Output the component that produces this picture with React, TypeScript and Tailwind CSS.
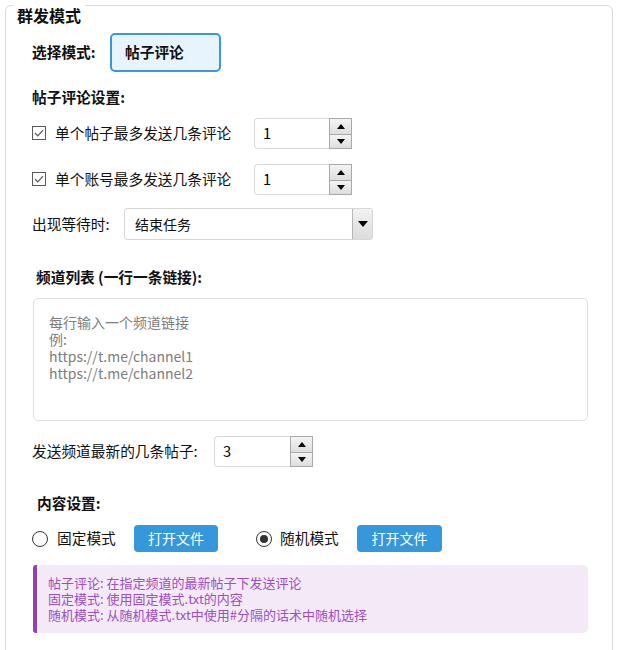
import { useState } from "react";

function Spin({ value, width }: { value: string; width: string }) {
  return (
    <div className={`flex h-[31px] ${width}`}>
      <div className="flex flex-1 items-center rounded-l-[4px] border border-r-0 border-[#d9d9d9] bg-white pl-[8px] text-[14.7px] text-black">
        {value}
      </div>
      <div className="flex w-[23px] flex-col">
        <div className="flex h-1/2 items-center justify-center border border-b-0 border-[#a9a9a9] bg-gradient-to-b from-[#f4f4f4] to-[#dedede]">
          <svg width="8" height="5" viewBox="0 0 8 5"><path d="M0 5 L4 0 L8 5 Z" fill="#000" /></svg>
        </div>
        <div className="flex h-1/2 items-center justify-center border border-[#a9a9a9] bg-gradient-to-b from-[#f4f4f4] to-[#dedede]">
          <svg width="8" height="5" viewBox="0 0 8 5"><path d="M0 0 L8 0 L4 5 Z" fill="#000" /></svg>
        </div>
      </div>
    </div>
  );
}

function Check() {
  return (
    <div className="flex h-[14px] w-[14px] items-center justify-center border border-[#5a5a5a] bg-white">
      <svg width="10" height="8" viewBox="0 0 10 8">
        <path d="M1 4 L3.8 6.8 L9 1.2" fill="none" stroke="#555" strokeWidth="1.2" />
      </svg>
    </div>
  );
}

function Radio({ on }: { on?: boolean }) {
  return (
    <div className="flex h-[16px] w-[16px] items-center justify-center rounded-full border border-[#333] bg-white">
      {on && <div className="h-[8px] w-[8px] rounded-full bg-[#333]" />}
    </div>
  );
}

export default function App() {
  const [mode, setMode] = useState("random");

  return (
    <div className="relative h-[650px] w-[620px] overflow-hidden bg-white font-['Microsoft_YaHei','Noto_Sans_CJK_SC',sans-serif] text-[#111]">
      <div className="relative ml-[5px] mt-[5px] h-[700px] w-[608px] rounded-[6px] border border-[#dadada] pl-[26px]">
        {/* group title */}
        <div className="absolute -top-[2px] left-[7px] flex h-[22px] items-center bg-white px-[4px] text-[16px] font-bold leading-none">
          群发模式
        </div>

        {/* mode select */}
        <div className="mt-[27px] flex h-[39px] items-center">
          <div className="w-[78px] text-[14.7px] font-bold leading-none">选择模式:</div>
          <button className="flex h-[39px] w-[111px] items-center rounded-[5px] border-2 border-[#3a97dc] bg-[#e8f4fd] pl-[13px] text-[14.7px] font-bold">
            帖子评论
          </button>
        </div>

        <div className="mt-[15px] flex h-[20px] items-center text-[14.7px] font-bold leading-none">帖子评论设置:</div>

        <div className="mt-[11px] flex h-[31px] items-center">
          <div className="flex w-[222px] items-center gap-[9px]">
            <Check />
            <span className="text-[14.7px] leading-none">单个帖子最多发送几条评论</span>
          </div>
          <Spin value="1" width="w-[98px]" />
        </div>

        <div className="mt-[15px] flex h-[31px] items-center">
          <div className="flex w-[222px] items-center gap-[9px]">
            <Check />
            <span className="text-[14.7px] leading-none">单个账号最多发送几条评论</span>
          </div>
          <Spin value="1" width="w-[98px]" />
        </div>

        <div className="mt-[13px] flex h-[32px] items-center">
          <div className="w-[92px] text-[14.7px] leading-none">出现等待时:</div>
          <div className="flex h-[32px] w-[249px] rounded-[3px] border border-[#d6d6d6] bg-white">
            <div className="flex flex-1 items-center pl-[10px] text-[14px]">结束任务</div>
            <div className="flex w-[20px] items-center justify-center border-l border-[#b5b5b5] bg-gradient-to-b from-[#f2f2f2] to-[#dcdcdc]">
              <svg width="10" height="6" viewBox="0 0 10 6"><path d="M0 0 L10 0 L5 6 Z" fill="#000" /></svg>
            </div>
          </div>
        </div>

        <div className="ml-[4px] mt-[27px] flex h-[20px] items-center text-[14.7px] font-bold leading-none">
          频道列表 (一行一条链接):
        </div>

        <div className="ml-[1px] mt-[11px] h-[123px] w-[555px] rounded-[5px] border border-[#dedede] bg-white pl-[15px] pt-[15px] text-[14px] leading-[17px] text-[#7d7d7d]">
          <div>每行输入一个频道链接</div>
          <div>例:</div>
          <div>https://t.me/channel1</div>
          <div>https://t.me/channel2</div>
        </div>

        <div className="mt-[15px] flex h-[31px] items-center">
          <div className="w-[182px] text-[14.7px] leading-none">发送频道最新的几条帖子:</div>
          <Spin value="3" width="w-[99px]" />
        </div>

        <div className="ml-[5px] mt-[26px] flex h-[20px] items-center text-[14.7px] font-bold leading-none">内容设置:</div>

        <div className="mt-[12px] flex h-[27px] items-center">
          <div className="flex items-center" onClick={() => setMode("fixed")}>
            <Radio on={mode === "fixed"} />
            <span className="ml-[9px] w-[77px] text-[14.7px] leading-none">固定模式</span>
          </div>
          <button className="h-[27px] w-[84px] rounded-[4px] bg-[#3498db] text-[14px] text-white">打开文件</button>
          <div className="ml-[38px] flex items-center" onClick={() => setMode("random")}>
            <Radio on={mode === "random"} />
            <span className="ml-[8px] w-[77px] text-[14.7px] leading-none">随机模式</span>
          </div>
          <button className="h-[27px] w-[85px] rounded-[4px] bg-[#3498db] text-[14px] text-white">打开文件</button>
        </div>

        <div className="ml-[1px] mt-[13px] flex h-[68px] w-[555px] flex-col justify-center rounded-r-[5px] rounded-l-[3px] border-l-[4px] border-[#8e44ad] bg-[#f4eaf7] pl-[11px] text-[13px] leading-[16px] text-[#9b4fc0]">
          <div>帖子评论: 在指定频道的最新帖子下发送评论</div>
          <div>固定模式: 使用固定模式.txt的内容</div>
          <div>随机模式: 从随机模式.txt中使用#分隔的话术中随机选择</div>
        </div>
      </div>
    </div>
  );
}
